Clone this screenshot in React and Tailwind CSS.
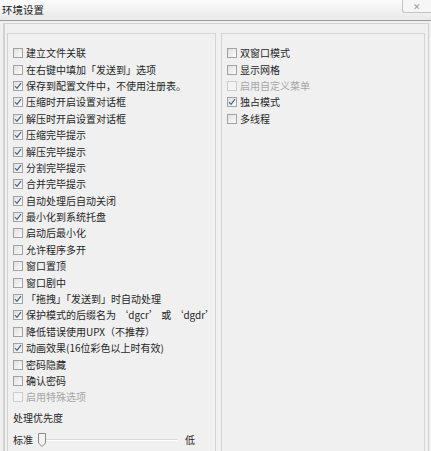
import React from 'react';

const leftItems = [
  ['建立文件关联', false],
  ['在右键中填加「发送到」选项', false],
  ['保存到配置文件中，不使用注册表。', true],
  ['压缩时开启设置对话框', true],
  ['解压时开启设置对话框', true],
  ['压缩完毕提示', true],
  ['解压完毕提示', true],
  ['分割完毕提示', true],
  ['合并完毕提示', true],
  ['自动处理后自动关闭', true],
  ['最小化到系统托盘', true],
  ['启动后最小化', false],
  ['允许程序多开', false],
  ['窗口置顶', false],
  ['窗口剧中', false],
  ['「拖拽」「发送到」时自动处理', true],
  ['保护模式的后缀名为 ‘dgcr’ 或 ‘dgdr’', true],
  ['降低错误使用UPX（不推荐）', false],
  ['动画效果(16位彩色以上时有效)', true],
  ['密码隐藏', false],
  ['确认密码', false],
  ['启用特殊选项', false, true],
];

const rightItems = [
  ['双窗口模式', false],
  ['显示网格', false],
  ['启用自定义菜单', false, true],
  ['独占模式', true],
  ['多线程', false],
];

function Check({ label, checked, disabled }) {
  return (
    <div className="flex items-center h-[16.4px] gap-[3px]">
      <div
        className={
          'w-[10px] h-[10px] shrink-0 border flex items-center justify-center ' +
          (disabled
            ? 'border-[#cdcdcd] bg-[#f4f4f4]'
            : 'border-[#a2a2a2] bg-gradient-to-br from-[#e0e0e0] to-[#fbfbfb]')
        }
      >
        {checked && (
          <svg width="8" height="8" viewBox="0 0 8 8">
            <path d="M1 4.2 L3 6.3 L7 1.2" fill="none" stroke="#4a5f86" strokeWidth="1.2" />
          </svg>
        )}
      </div>
      <span className={'whitespace-nowrap ' + (disabled ? 'text-[#a6a6a6]' : 'text-[#262626]')}>{label}</span>
    </div>
  );
}

export default function App() {
  return (
    <div
      className="w-[431px] h-[451px] overflow-hidden bg-[#f0f0f0] text-[10px] leading-none"
      style={{ fontFamily: '"Noto Sans CJK SC", "Liberation Sans", sans-serif' }}
    >
      <div className="relative h-[21px] bg-gradient-to-b from-[#fbfbfb] to-[#e9e9e9] border-b border-[#9a9a9a] flex items-center pl-[2px]">
        <span className="text-[10.5px] text-[#222]">环境设置</span>
        <div className="absolute right-0 top-0 w-[29px] h-[13px] border-l border-b border-[#c4c4c4] rounded-bl-[3px] bg-[#f6f6f6] flex items-center justify-center">
          <span className="text-[9px] text-[#9a9a9a]">✕</span>
        </div>
      </div>
      <div className="mt-[2px] ml-[3px] mr-[2px] h-[440px] border-l-2 border-t border-r border-[#d2d2d2] pl-[2px] pt-[9px] pr-[3px] flex gap-[5px]">
        <div className="w-[209px] h-[460px] border border-[#d4d4d4] pl-[5px] pt-[11px] shrink-0">
          {leftItems.map(([l, c, d]) => (
            <Check key={l} label={l} checked={c} disabled={d} />
          ))}
          <div className="h-[19px] flex items-end pb-[2px] text-[#262626]">处理优先度</div>
          <div className="mt-[8px] flex items-center h-[14px] text-[#262626]">
            <span>标准</span>
            <div className="relative ml-[8px] w-[136px] h-[14px] flex items-center">
              <div className="w-full h-[2px] bg-[#d8d8d8] border-b border-white" />
              <svg className="absolute left-[-3px] top-0" width="8" height="14" viewBox="0 0 8 14">
                <path d="M0.5 0.5 H7.5 V10 L4 13.5 L0.5 10 Z" fill="#f3f3f3" stroke="#8a8a8a" />
              </svg>
            </div>
            <span className="ml-[8px]">低</span>
          </div>
        </div>
        <div className="flex-1 h-[460px] border border-[#d4d4d4] pl-[5px] pt-[11px]">
          {rightItems.map(([l, c, d]) => (
            <Check key={l} label={l} checked={c} disabled={d} />
          ))}
        </div>
      </div>
    </div>
  );
}
